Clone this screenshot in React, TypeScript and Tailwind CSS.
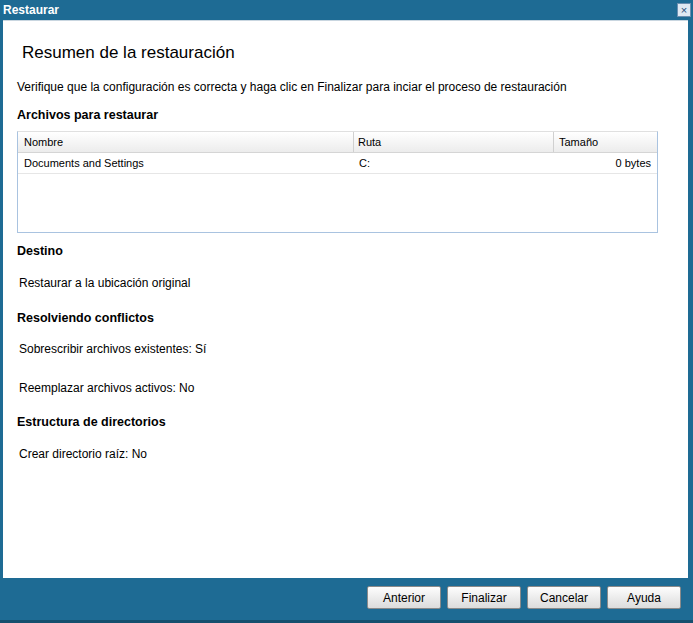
export default function App() {
  const f = { fontFamily: '"Liberation Sans", Arial, sans-serif' };
  const btn =
    "w-[74px] h-[23px] border border-[#8a8a8a] rounded-[2px] bg-gradient-to-b from-[#fdfdfd] to-[#dcdcdc] text-[12px] text-black";
  return (
    <div style={f} className="w-[693px] h-[623px] bg-[#1e6b94] flex flex-col text-black">
      <div className="h-[20px] flex items-center justify-between pl-[3px] pr-[2px]">
        <span className="text-white font-bold text-[12px]">Restaurar</span>
        <div className="w-[14px] h-[14px] bg-[#dfe9f3] border border-[#6b8fb0] flex items-center justify-center text-[11px] leading-none text-[#1e4b78]">×</div>
      </div>
      <div className="mx-[3px] mr-[5px] h-[558px] bg-white border-t border-[#c9d6e0] pl-[14px] pr-[30px]">
        <div className="pt-[22px] pl-[5px] text-[17px] leading-[20px]">Resumen de la restauración</div>
        <div className="mt-[15px] text-[12px]">Verifique que la configuración es correcta y haga clic en Finalizar para inciar el proceso de restauración</div>
        <div className="mt-[10px] text-[12.5px] font-bold">Archivos para restaurar</div>
        <div className="mt-[6px] h-[102px] border border-[#a9c3e0] border-t-[#e0e0e0] text-[11px]">
          <div className="flex h-[21px] bg-gradient-to-b from-[#ffffff] to-[#ececec] border-b border-[#d5d5d5]">
            <div className="w-[336px] pl-[6px] flex items-center border-r border-[#d0d0d0]">Nombre</div>
            <div className="w-[200px] pl-[4px] flex items-center border-r border-[#d0d0d0]">Ruta</div>
            <div className="flex-1 pl-[5px] flex items-center">Tamaño</div>
          </div>
          <div className="flex h-[21px] border-b border-[#e6e6e6]">
            <div className="w-[336px] pl-[6px] flex items-center">Documents and Settings</div>
            <div className="w-[200px] pl-[5px] flex items-center">C:</div>
            <div className="flex-1 pr-[6px] flex items-center justify-end">0 bytes</div>
          </div>
        </div>
        <div className="mt-[9px] text-[12.5px] font-bold">Destino</div>
        <div className="mt-[13px] pl-[2px] text-[12px]">Restaurar a la ubicación original</div>
        <div className="mt-[17px] text-[12.5px] font-bold">Resolviendo conflictos</div>
        <div className="mt-[13px] pl-[2px] text-[12px]">Sobrescribir archivos existentes: Sí</div>
        <div className="mt-[21px] pl-[2px] text-[12px]">Reemplazar archivos activos: No</div>
        <div className="mt-[16px] text-[12.5px] font-bold">Estructura de directorios</div>
        <div className="mt-[13px] pl-[2px] text-[12px]">Crear directorio raíz: No</div>
      </div>
      <div className="flex justify-end gap-[6px] pr-[12px] pt-[8px]">
        <button className={btn}>Anterior</button>
        <button className={btn}>Finalizar</button>
        <button className={btn}>Cancelar</button>
        <button className={btn}>Ayuda</button>
      </div>
      <div className="mt-auto h-[3px] bg-[#164f6e]" />
    </div>
  );
}
